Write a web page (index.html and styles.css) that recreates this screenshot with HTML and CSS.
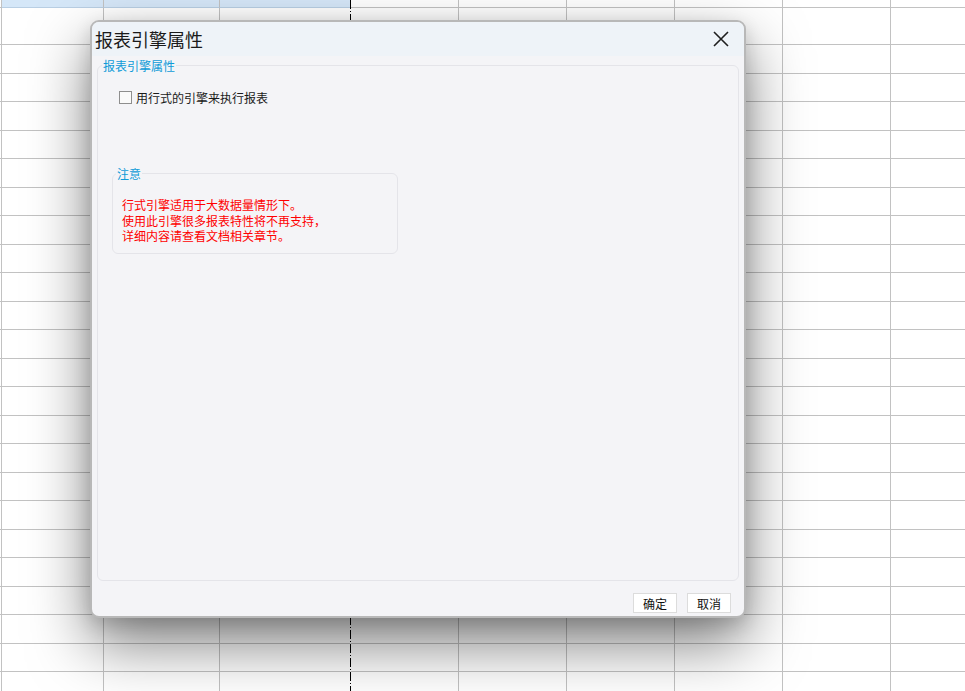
FILE: index.html
```html
<!DOCTYPE html>
<html lang="zh-CN">
<head>
    <meta charset="UTF-8">
    <meta name="viewport" content="width=device-width, initial-scale=1.0">
    <title>报表引擎属性</title>
    <link rel="stylesheet" href="styles.css">
</head>
<body>
    <div class="sheet">
        <div class="row row-top">
            <div class="cell c0"></div>
            <div class="cell c1 sel"></div>
            <div class="cell c2 sel"></div>
            <div class="cell c3 sel"></div>
            <div class="cell c4"></div>
            <div class="cell c4"></div>
            <div class="cell c4"></div>
            <div class="cell c4"></div>
            <div class="cell c4"></div>
            <div class="cell c4"></div>
        </div>
        <div class="row row-tall">
            <div class="cell c0"></div><div class="cell c1"></div><div class="cell c2"></div><div class="cell c3"></div>
            <div class="cell c4"></div><div class="cell c4"></div><div class="cell c4"></div><div class="cell c4"></div><div class="cell c4"></div><div class="cell c4"></div>
        </div>
    </div>

    <!-- разрыв страницы -->
    <div class="page-break"></div>

    <div class="dialog">
        <div class="dialog-title">
            <span>报表引擎属性</span>
            <button class="close-btn" aria-label="关闭">
                <svg width="16" height="16" viewBox="0 0 16 16">
                    <path d="M1 1 L15 15 M15 1 L1 15" stroke="#1f1f1f" stroke-width="1.6" fill="none"/>
                </svg>
            </button>
        </div>
        <div class="dialog-body">
            <fieldset class="group main-group">
                <legend>报表引擎属性</legend>
                <div class="group-content">
                    <label class="check-row">
                        <span class="checkbox"></span>
                        <span>用行式的引擎来执行报表</span>
                    </label>
                    <fieldset class="group note-group">
                        <legend>注意</legend>
                        <div class="note-text">
                            行式引擎适用于大数据量情形下。<br>
                            使用此引擎很多报表特性将不再支持，<br>
                            详细内容请查看文档相关章节。
                        </div>
                    </fieldset>
                </div>
            </fieldset>
            <div class="dialog-footer">
                <button class="btn">确定</button>
                <button class="btn">取消</button>
            </div>
        </div>
    </div>

    <script>
        // дорисовываем строки таблицы
        const sheet = document.querySelector('.sheet');
        const tpl = document.querySelector('.row-tall');
        for (let i = 0; i < 23; i++) {
            const row = tpl.cloneNode(true);
            row.className = 'row';
            sheet.appendChild(row);
        }
    </script>
</body>
</html>
```

FILE: styles.css
```css
body {
    margin: 0;
    font-family: "Noto Sans CJK SC", "Microsoft YaHei", sans-serif;
    background: #fff;
    overflow: hidden;
    height: 691px;
}
.sheet {
    display: flex;
    flex-direction: column;
    width: 965px;
    height: 691px;
    overflow: hidden;
}
.row {
    display: flex;
    height: 28.5px;
    flex: none;
}
.row-top {
    height: 8px;
}
.row-tall {
    height: 37px;
}
.cell {
    box-sizing: border-box;
    border-right: 1px solid #c2c2c2;
    border-bottom: 1px solid #c2c2c2;
    flex: none;
}
.c0 { width: 2px; }
.c1 { width: 102px; }
.c2 { width: 116px; }
.c3 { width: 131px; border-right-color: transparent; }
.c4 { width: 108px; }
.sel {
    background: #d5e7f8;
    border-bottom-color: #b9cfe4;
}
.page-break {
    position: absolute;
    top: 0;
    left: 350px;
    width: 1px;
    height: 691px;
    background: repeating-linear-gradient(to bottom, #000 0, #000 9px, transparent 9px, transparent 11px, #000 11px, #000 12px, transparent 12px, transparent 14px);
}
.dialog {
    position: absolute;
    left: 90px;
    top: 20px;
    width: 656px;
    height: 598px;
    box-sizing: border-box;
    border: 2px solid #b8b8b8;
    border-radius: 9px;
    background: #f4f4f7;
    box-shadow: 0 26px 60px rgba(0, 0, 0, 0.5), 0 6px 18px rgba(0, 0, 0, 0.14);
    display: flex;
    flex-direction: column;
    overflow: hidden;
}
.dialog-title {
    height: 34px;
    flex: none;
    background: #eef3f8;
    display: flex;
    align-items: center;
    justify-content: space-between;
    padding: 0 15px 0 3px;
    font-size: 18px;
    color: #1a1a1a;
}
.close-btn {
    background: none;
    border: none;
    padding: 0;
    width: 16px;
    height: 16px;
    display: flex;
    cursor: pointer;
}
.dialog-body {
    flex: 1;
    display: flex;
    flex-direction: column;
    padding: 1px 5px 3px 5px;
    min-height: 0;
}
.group {
    margin: 0;
    border: 1px solid #e4e4e9;
    border-radius: 6px;
    min-width: 0;
}
.group legend {
    padding: 0 1px;
    font-size: 12px;
    line-height: 17px;
    color: #0f9bd7;
}
.main-group {
    flex: 1;
    padding: 0 5px 0 4px;
}
.group-content {
    padding: 15px 0 0 10px;
}
.check-row {
    display: flex;
    align-items: center;
    gap: 4px;
    padding-left: 7px;
    font-size: 12px;
    line-height: 17px;
    color: #1a1a1a;
}
.checkbox {
    width: 11px;
    height: 11px;
    border: 1px solid #8e8e8e;
    background: #fafafa;
}
.note-group {
    width: 286px;
    box-sizing: border-box;
    margin-top: 59px;
    padding: 0 4px 9px 3px;
}
.note-text {
    padding: 15px 0 0 6px;
    font-size: 12px;
    line-height: 15.5px;
    color: #ff0000;
}
.dialog-footer {
    display: flex;
    justify-content: flex-end;
    gap: 10px;
    margin-top: 12px;
    padding-right: 8px;
}
.btn {
    width: 44px;
    height: 20px;
    padding: 0;
    border: 1px solid #dcdcdc;
    background: #fff;
    font-family: inherit;
    font-size: 12px;
    color: #111;
    cursor: pointer;
}
```
